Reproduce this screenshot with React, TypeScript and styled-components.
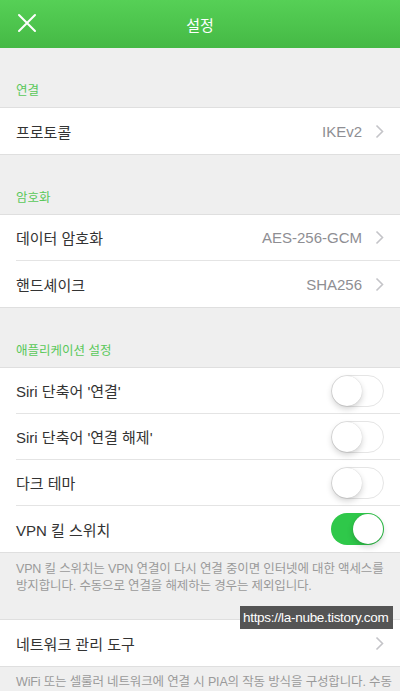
import React from "react";
import styled, { createGlobalStyle } from "styled-components";

const Global = createGlobalStyle`
  html, body { margin: 0; padding: 0; background: #efeff4; }
  body { font-family: "Liberation Sans", "Noto Sans CJK KR", sans-serif; -webkit-font-smoothing: antialiased; }
  * { box-sizing: border-box; }
`;

const Page = styled.div`
  width: 400px;
  height: 691px;
  overflow: hidden;
  background: #efefef;
  position: relative;
`;

const Header = styled.header`
  height: 48px;
  background: linear-gradient(#56d056, #45b945);
  display: flex;
  align-items: center;
  justify-content: center;
  position: relative;
`;

const CloseBtn = styled.button`
  position: absolute;
  left: 14px;
  top: 10px;
  width: 26px;
  height: 26px;
  border: 0;
  background: none;
  padding: 0;
  display: flex;
  align-items: center;
  justify-content: center;
`;

const Title = styled.h1`
  margin: 0;
  color: #fff;
  font-size: 15px;
  font-weight: 400;
`;

const SectionHeader = styled.div`
  height: 59px;
  display: flex;
  align-items: flex-end;
  padding: 0 16px 8px;
  color: #5ac85a;
  font-size: 12.5px;
`;

const Group = styled.div`
  background: #fff;
  border-top: 1px solid #dfdfdf;
  border-bottom: 1px solid #dfdfdf;
`;

const Row = styled.div<{ $last?: boolean }>`
  height: 46px;
  margin-left: 16px;
  padding-right: 16px;
  display: flex;
  align-items: center;
  border-bottom: ${(p) => (p.$last ? "0" : "1px solid #e4e4e4")};
`;

const Label = styled.span`
  flex: 1;
  color: #333;
  font-size: 15px;
`;

const Value = styled.span`
  color: #8e8e93;
  font-size: 15px;
  margin-right: 13px;
`;

const Toggle = styled.div<{ $on?: boolean }>`
  width: 53px;
  height: 32px;
  border-radius: 16px;
  background: ${(p) => (p.$on ? "#2fc84a" : "#fff")};
  border: ${(p) => (p.$on ? "0" : "1.5px solid #e5e5e5")};
  position: relative;
`;

const Knob = styled.div<{ $on?: boolean }>`
  position: absolute;
  top: ${(p) => (p.$on ? "1px" : "0px")};
  ${(p) => (p.$on ? "right: 1px;" : "left: 0px;")}
  width: 30px;
  height: 30px;
  border-radius: 50%;
  background: #fff;
  box-shadow: 0 3px 6px rgba(0, 0, 0, 0.18), 0 0 1px rgba(0, 0, 0, 0.2);
`;

const Footer = styled.p`
  margin: 0;
  padding: 8px 16px 0;
  height: 66px;
  color: #9a9a9a;
  font-size: 12.5px;
  line-height: 17px;
  letter-spacing: -0.15px;
`;

const Footer2 = styled(Footer)`
  padding-top: 7px;
  white-space: nowrap;
`;

const Watermark = styled.div`
  position: absolute;
  left: 240px;
  top: 606px;
  width: 153px;
  height: 23px;
  background: rgba(70, 70, 70, 0.92);
  color: #fff;
  font-family: "Liberation Sans", sans-serif;
  font-size: 13.5px;
  letter-spacing: -0.3px;
  white-space: nowrap;
  display: flex;
  align-items: center;
  padding-left: 3px;
`;

const Chevron = () => (
  <svg width="9" height="15" viewBox="0 0 9 15">
    <path d="M1.5 1.5 L7.5 7.5 L1.5 13.5" fill="none" stroke="#c4c4c8" strokeWidth="1.6" />
  </svg>
);

const NavRow = ({ label, value, last }: { label: string; value?: string; last?: boolean }) => (
  <Row $last={last}>
    <Label>{label}</Label>
    {value && <Value>{value}</Value>}
    <Chevron />
  </Row>
);

const SwitchRow = ({ label, on, last }: { label: string; on?: boolean; last?: boolean }) => (
  <Row $last={last}>
    <Label>{label}</Label>
    <Toggle $on={on}>
      <Knob $on={on} />
    </Toggle>
  </Row>
);

export default function App() {
  return (
    <Page>
      <Global />
      <Header>
        <CloseBtn>
          <svg width="22" height="22" viewBox="0 0 22 22">
            <path d="M3 3 L19 19 M19 3 L3 19" stroke="#fff" strokeWidth="2" strokeLinecap="round" />
          </svg>
        </CloseBtn>
        <Title>설정</Title>
      </Header>
      <SectionHeader>연결</SectionHeader>
      <Group>
        <NavRow label="프로토콜" value="IKEv2" last />
      </Group>
      <SectionHeader>암호화</SectionHeader>
      <Group>
        <NavRow label="데이터 암호화" value="AES-256-GCM" />
        <NavRow label="핸드셰이크" value="SHA256" last />
      </Group>
      <SectionHeader>애플리케이션 설정</SectionHeader>
      <Group>
        <SwitchRow label="Siri 단축어 '연결'" />
        <SwitchRow label="Siri 단축어 '연결 해제'" />
        <SwitchRow label="다크 테마" />
        <SwitchRow label="VPN 킬 스위치" on last />
      </Group>
      <Footer>
        VPN 킬 스위치는 VPN 연결이 다시 연결 중이면 인터넷에 대한 액세스를 방지합니다. 수동으로 연결을 해제하는 경우는 제외입니다.
      </Footer>
      <Group>
        <NavRow label="네트워크 관리 도구" last />
      </Group>
      <Footer2>WiFi 또는 셀룰러 네트워크에 연결 시 PIA의 작동 방식을 구성합니다. 수동</Footer2>
      <Watermark>https://la-nube.tistory.com</Watermark>
    </Page>
  );
}
